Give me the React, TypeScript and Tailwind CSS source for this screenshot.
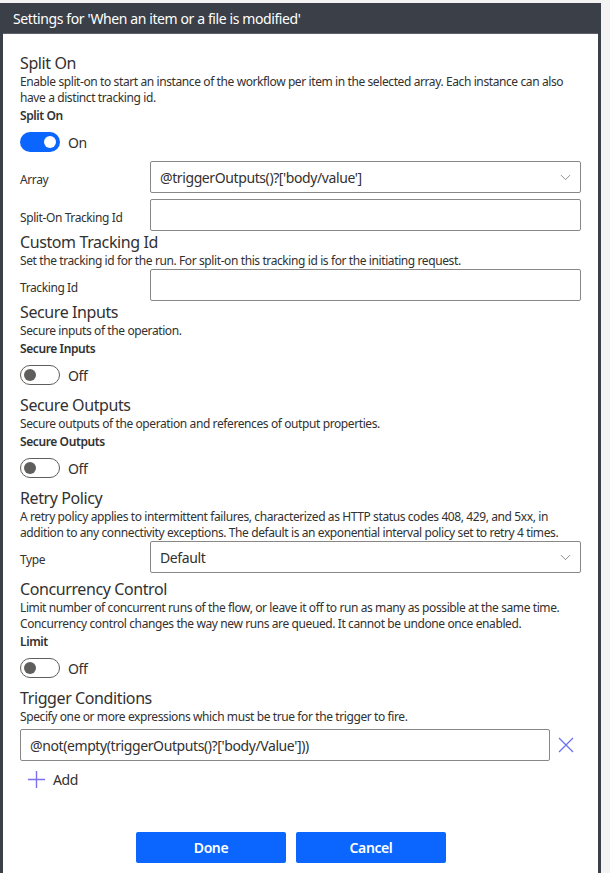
import { ChevronDown } from 'lucide-react'

const font = { fontFamily: '"Noto Sans", "Open Sans", sans-serif' }

function Title({ children }: { children: React.ReactNode }) {
  return <div className="text-[16px] leading-[22px] text-[#323130]">{children}</div>
}

function Desc({ children }: { children: React.ReactNode }) {
  return <div className="text-[12px] leading-[16px] text-[#323130] whitespace-nowrap">{children}</div>
}

function BoldLabel({ children }: { children: React.ReactNode }) {
  return <div className="text-[12px] leading-[20px] font-semibold text-[#323130]">{children}</div>
}

function Toggle({ on }: { on?: boolean }) {
  return (
    <div className="flex items-center gap-2 h-5 mt-[6px] mb-[9px]">
      {on ? (
        <div className="w-10 h-5 rounded-full bg-[#0a66ff] flex items-center justify-end pr-[4px]">
          <div className="w-3 h-3 rounded-full bg-white" />
        </div>
      ) : (
        <div className="w-10 h-5 rounded-full border border-[#605e5c] flex items-center pl-[3px]">
          <div className="w-3 h-3 rounded-full bg-[#605e5c]" />
        </div>
      )}
      <span className="text-[14px] text-[#323130]">{on ? 'On' : 'Off'}</span>
    </div>
  )
}

function Field({ label, value, select }: { label: string; value?: string; select?: boolean }) {
  return (
    <div className="flex items-center h-8">
      <div className="w-[130px] mt-[5px] text-[12px] text-[#323130]">{label}</div>
      <div className="flex-1 h-8 border border-[#8a8886] rounded-[2px] flex items-center pl-[9px] pr-[6px]">
        <span className="flex-1 text-[14px] text-[#323130]">{value}</span>
        {select && <ChevronDown size={17} strokeWidth={1} className="text-[#605e5c]" />}
      </div>
    </div>
  )
}

export default function App() {
  return (
    <div className="w-[610px] h-[873px] bg-[#f3f3f3] pt-[3px] overflow-hidden tracking-[-0.025em]" style={font}>
      <div className="w-[601px] h-[870px] bg-white border-x-[3px] border-[#3b4048] flex flex-col">
        <div className="h-[31px] bg-[#3b4048] border-b border-[#5c6169] flex items-center pl-[10px] text-white text-[14px]">
          Settings for 'When an item or a file is modified'
        </div>

        <div className="px-[17px] pt-[18px] flex flex-col">
          <Title>Split On</Title>
          <Desc>
            Enable split-on to start an instance of the workflow per item in the selected array. Each instance can also
            <br />
            have a distinct tracking id.
          </Desc>
          <BoldLabel>Split On</BoldLabel>
          <Toggle on />
          <Field label="Array" value="@triggerOutputs()?['body/value']" select />
          <div className="mt-[6px]">
            <Field label="Split-On Tracking Id" />
          </div>

          <Title>Custom Tracking Id</Title>
          <Desc>Set the tracking id for the run. For split-on this tracking id is for the initiating request.</Desc>
          <Field label="Tracking Id" />

          <Title>Secure Inputs</Title>
          <Desc>Secure inputs of the operation.</Desc>
          <BoldLabel>Secure Inputs</BoldLabel>
          <Toggle />

          <Title>Secure Outputs</Title>
          <Desc>Secure outputs of the operation and references of output properties.</Desc>
          <BoldLabel>Secure Outputs</BoldLabel>
          <Toggle />

          <Title>Retry Policy</Title>
          <Desc>
            A retry policy applies to intermittent failures, characterized as HTTP status codes 408, 429, and 5xx, in
            <br />
            addition to any connectivity exceptions. The default is an exponential interval policy set to retry 4 times.
          </Desc>
          <Field label="Type" value="Default" select />

          <div className="mt-[5px]">
            <Title>Concurrency Control</Title>
          </div>
          <Desc>
            Limit number of concurrent runs of the flow, or leave it off to run as many as possible at the same time.
            <br />
            Concurrency control changes the way new runs are queued. It cannot be undone once enabled.
          </Desc>
          <BoldLabel>Limit</BoldLabel>
          <Toggle />

          <Title>Trigger Conditions</Title>
          <Desc>Specify one or more expressions which must be true for the trigger to fire.</Desc>
          <div className="flex items-center mt-1">
            <div className="w-[530px] h-8 border border-[#8a8886] rounded-[2px] flex items-center pl-[9px] text-[14px] text-[#323130]">
              @not(empty(triggerOutputs()?['body/Value']))
            </div>
            <svg width="16" height="16" viewBox="0 0 16 16" className="ml-[8px]">
              <path d="M1 1 L15 15 M15 1 L1 15" stroke="#6b70f2" strokeWidth="1.3" fill="none" />
            </svg>
          </div>
          <div className="flex items-center h-8 mt-[2px] pl-[8px] gap-[8px]">
            <svg width="17" height="17" viewBox="0 0 17 17">
              <path d="M8.5 0 V17 M0 8.5 H17" stroke="#7a6ff0" strokeWidth="1.4" fill="none" />
            </svg>
            <span className="text-[14px] text-[#323130]">Add</span>
          </div>

          <div className="flex mt-[37px] pl-[116px] gap-[10px]">
            <button className="w-[150px] h-[31px] bg-[#0a66ff] rounded-[2px] text-white text-[14px] font-semibold">
              Done
            </button>
            <button className="w-[150px] h-[31px] bg-[#0a66ff] rounded-[2px] text-white text-[14px] font-semibold">
              Cancel
            </button>
          </div>
        </div>
      </div>
    </div>
  )
}
